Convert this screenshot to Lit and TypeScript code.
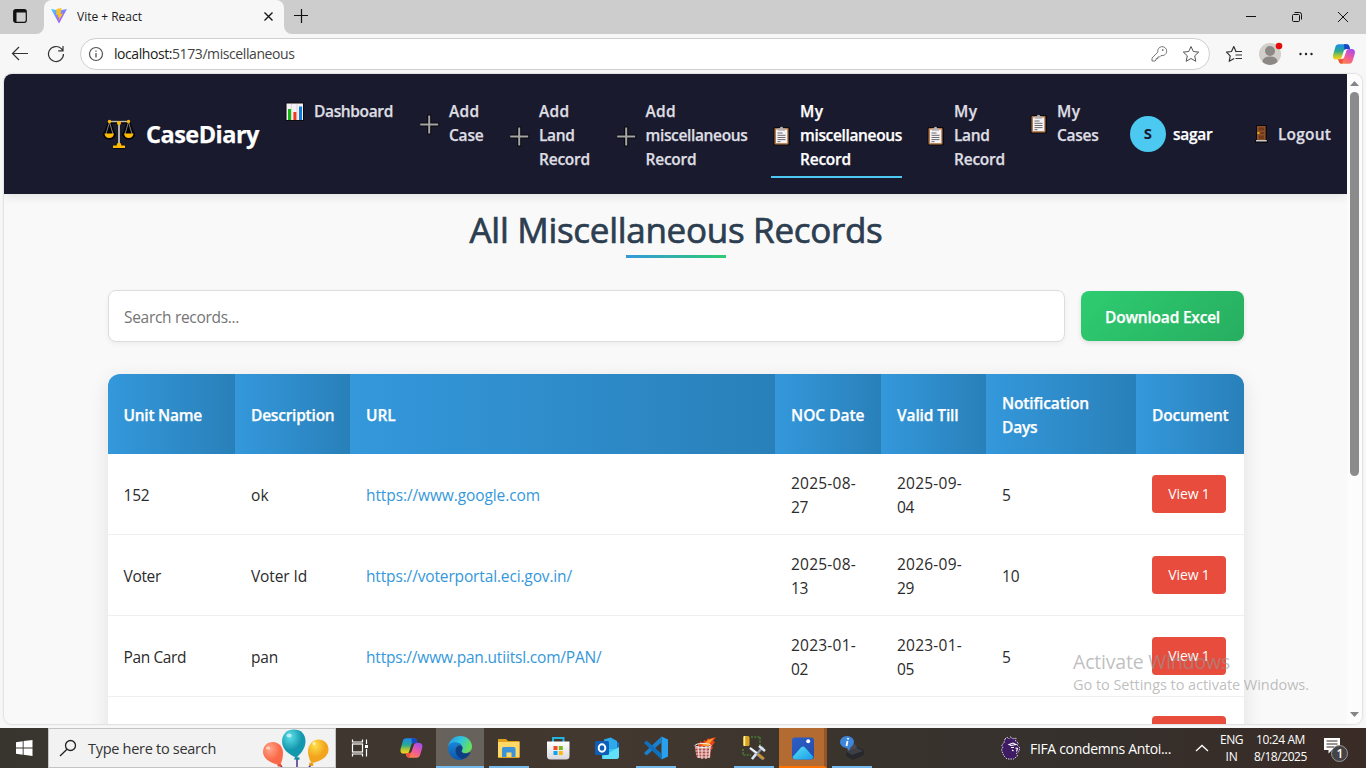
import { LitElement, html, css, svg } from "lit";
import { customElement, property } from "lit/decorators.js";

/* A single line of text whose tracking is adjusted to fill a given width. */
@customElement("fit-text")
class FitText extends LitElement {
  @property() text = "";
  @property({ type: Number }) w = 0;
  static styles = css`
    :host { display: block; white-space: pre; width: max-content; }
    span { display: inline-block; }
  `;
  render() { return html`<span>${this.text}</span>`; }
  firstUpdated() {
    const s = this.renderRoot.querySelector("span") as HTMLElement;
    const n = this.text.length;
    if (this.w && n) s.style.letterSpacing = (this.w - s.getBoundingClientRect().width) / n + "px";
  }
}
const t = (text: string, w: number) => html`<fit-text .text=${text} .w=${w}></fit-text>`;

const plus = html`<svg width="22" height="22" viewBox="2 0 22 22"><path d="M9.2 1.5h4v8h8v4h-8v8h-4v-8h-8v-4h8z" fill="#08080e"/><path d="M10.2 2.5h2v8h8v2h-8v8h-2v-8h-8v-2h8z" fill="#a5a5a5"/></svg>`;
const board = html`<svg width="20" height="22" viewBox="-1 0 20 22"><rect x="1.5" y="2" width="16.5" height="18.5" rx="1.5" fill="#0b0a10"/><rect x="2.5" y="3" width="14" height="16.5" rx="1" fill="#b57b4b"/><rect x="4" y="4.5" width="11.2" height="13.6" fill="#f4f2f4"/><path d="M6 3.4h1.8a1.7 1.7 0 013.4 0H13v2.4H6z" fill="#b5b0b4"/><path d="M5.5 8h5M5.5 10.3h8M5.5 12.5h8M5.5 14.6h8M5.5 16.7h3" stroke="#6e6a70"/></svg>`;
const chart = html`<svg width="20" height="22" viewBox="0 0 20 22"><rect x=".5" y="1.5" width="18.5" height="18.5" fill="#0b0a10"/><rect x="1.5" y="2.5" width="16.5" height="16.5" fill="#f4f0f4"/><path d="M6.5 3v16M12 3v16" stroke="#ddd7dd"/><rect x="3" y="8" width="3" height="11" fill="#13b510"/><rect x="8.4" y="11" width="3" height="8" fill="#f03a20"/><rect x="14" y="5.5" width="3" height="13.5" fill="#0d7cdd"/></svg>`;
const door = html`<svg width="14" height="20" viewBox="0 0 14 20"><path d="M2 1h11v15h1v3H1v-3h1z" fill="#0b0a10"/><path d="M3 2h8.6v14H3z" fill="#8d4f2a"/><path d="M4.8 3.6h5.2v3H4.8zM4.8 11.6h5.2V15H4.8zM6.5 8h3.5v2H6.5z" fill="#71391a"/><circle cx="4.4" cy="9" r="1.1" fill="#ffb900"/><path d="M2 16h10.8v1.6H2z" fill="#c9c9c9"/></svg>`;
const scales = html`<svg width="32" height="34" viewBox="0 0 32 34"><g stroke="#050508" stroke-width="3.5" fill="#050508" stroke-linejoin="round"><path d="M7 5h18M16 3v26M10 30h12M6.500 5L2 18h9zM25.500 5L21 18h9z"/><path d="M1.500 17h9.500q-1 4-4.750 4T1.500 17zM21 17h9.500q-1 4-4.750 4T21 17z"/></g><path d="M7 4.500h18" stroke="#bdbdbd" stroke-width="1.300"/><path d="M16 6v21" stroke="#b0b0b0" stroke-width="2.200"/><path d="M6.500 5L3 17M6.500 5l3.500 12M25.500 5L22 17M25.500 5L29 17" stroke="#9b9b9b" stroke-width=".8"/><g fill="#ffb900"><circle cx="6.500" cy="4.500" r="1.700"/><circle cx="25.500" cy="4.500" r="1.700"/><circle cx="16" cy="6" r="2.100"/><path d="M1.500 16.500H11q-.7 4.500-4.750 4.500T1.500 16.500zM21 16.500h9.500q-.7 4.500-4.750 4.500T21 16.500zM14.500 26h3l1 2.500h3.500v2.500h-12v-2.500h3.500z"/></g></svg>`;
const copilot = (id: string) => svg`<defs>
  <linearGradient id="${id}a" x1="0" y1="0" x2="0" y2="1"><stop offset="0" stop-color="#1c8cf0"/><stop offset=".45" stop-color="#2aa98f"/><stop offset=".75" stop-color="#b5c832"/><stop offset="1" stop-color="#ffd21c"/></linearGradient>
  <linearGradient id="${id}b" x1=".8" y1="0" x2=".2" y2="1"><stop offset="0" stop-color="#a44cf0"/><stop offset=".5" stop-color="#f05a9a"/><stop offset="1" stop-color="#ff8a3c"/></linearGradient></defs>
  <path d="M6.500 1.200H14c1.800 0 2.500 1 3 2.800l.6 2H14c-1.800 0-2.500.8-3 2.500L9.300 14c-.5 1.800-1.200 2.600-3 2.600H3.500C.8 16.600 0 14 .7 11.500l2-7C3.300 2.300 4.300 1.200 6.500 1.200z" fill="url(#${id}a)"/>
  <path d="M11.500 1.200h2.700c1.700 0 2.300 1 2.800 2.800l.6 2H14c-1 0-1.700.3-2.200 1z" fill="#1748c8"/>
  <path d="M16.500 20.800H9.200c-1.800 0-2.500-1-3-2.800l-.5-1.700h3c1.800 0 2.700-.8 3.200-2.500l1.800-5.300c.5-1.800 1.300-2.500 3-2.500h2.700c2.700 0 3.500 2.500 2.800 5l-2 6.500c-.7 2.200-1.700 3.300-3.700 3.300z" fill="url(#${id}b)"/>
  <path d="M5.700 16.300h3c1 0 1.700-.3 2.300-1l-1.500 5.400c-1.800 0-2.700-1-3.200-2.700z" fill="#f0503c"/>`;

const NAV: [any, [string, number][], boolean][] = [
  [chart, [["Dashboard", 79]], false],
  [plus, [["Add", 30.500], ["Case", 34.500]], false],
  [plus, [["Add", 30.500], ["Land", 35.500], ["Record", 51]], false],
  [plus, [["Add", 30.500], ["miscellaneous", 102], ["Record", 51]], false],
  [board, [["My", 23.500], ["miscellaneous", 102], ["Record", 51]], true],
  [board, [["My", 23.500], ["Land", 35.500], ["Record", 51]], false],
  [board, [["My", 23.500], ["Cases", 41.500]], false],
];
const HEAD: [string, number][][] = [[["Unit Name", 78.500]], [["Description", 83.500]], [["URL", 29.500]], [["NOC Date", 73.500]], [["Valid Till", 61.500]], [["Notification", 87], ["Days", 35.500]], [["Document", 76.500]]];
const ROWS: [string, number][][][] = [
  [[["152", 26]], [["ok", 18]], [["https://www.google.com", 174]], [["2025-08-", 65], ["27", 17]], [["2025-09-", 65], ["04", 17]], [["5", 9]]],
  [[["Voter", 37.500]], [["Voter Id", 56]], [["https://voterportal.eci.gov.in/", 206]], [["2025-08-", 65], ["13", 17]], [["2026-09-", 65], ["29", 17]], [["10", 17.500]]],
  [[["Pan Card", 62.500]], [["pan", 27]], [["https://www.pan.utiitsl.com/PAN/", 235.500]], [["2023-01-", 65], ["02", 17]], [["2023-01-", 65], ["05", 17]], [["5", 9]]],
];

/* Taskbar application icons, each on a 24px grid. */
const APPS: [any, string][] = [
  [svg`<g fill="none" stroke="#fff" stroke-width="1.200"><rect x="4.500" y="8" width="10" height="8"/><path d="M4.500 3.500v2.500h10V3.500M4.500 20.500V18h10v2.500M18.500 3.500V8M18.500 13v7.500"/></g><rect x="17" y="9" width="3" height="3" fill="#fff"/>`, "first"],
  [svg`<g transform="translate(1 1)">${copilot("t")}</g>`, ""],
  [svg`<defs><linearGradient id="e1" x1="0" x2="1" y2=".4"><stop stop-color="#2496e8"/><stop offset=".55" stop-color="#30c6dc"/><stop offset="1" stop-color="#65e060"/></linearGradient><linearGradient id="e2" x1="0" y1="0" x2="0" y2="1"><stop stop-color="#1686d8"/><stop offset="1" stop-color="#0b55ad"/></linearGradient></defs><path d="M.3 10.500C1 4.500 6 0 12 0c7 0 12 5 12 10.500 0 4-3 6.500-6.500 6.500-2.500 0-4-1-4-1.800 0-.7 1-1 1-3.200 0-3-3-5-6.500-5-4 0-6.800 1.700-7.700 3.500z" fill="url(#e1)"/><path d="M.2 11C1 7.500 4.500 6 8 6.300c3 .2 5 1.700 5.800 3.200-3-1-6.800 1-6.300 5.500.4 4 4 7 8 8.300-1 .5-2.200.7-3.500.7C4.500 24-.5 18 .2 11z" fill="url(#e2)"/><path d="M7.500 14.500c0-3 2-5 4.600-5 1.500 0 2.400 1.200 2.400 2.500 0 1.800-1 2.300-1 3.200 0 1 2 2.800 5 2.300 1.300-.2 2.500-.7 3.500-1.200.4-.2.7.2.4.6-1.500 2.800-4 5.200-7.400 6.100-4-.6-7.500-4-7.500-8.500z" fill="#0d3f86"/>`, "cur"],
  [svg`<path d="M1 3h8l2 2h11.500v17H1z" fill="#e0a21a"/><path d="M1 6h21.500v15H1z" fill="#ffd968"/><path d="M5 12.500Q5 11 6.500 11h10.500q1.500 0 1.500 1.500V21h-4v-4.500h-5V21H5z" fill="#3b94d9"/>`, "run"],
  [svg`<defs><linearGradient id="st" x2="0" y2="1"><stop stop-color="#fff"/><stop offset="1" stop-color="#d8d8dc"/></linearGradient></defs><path d="M7 6V2h10.500v4" fill="none" stroke="#22b5e0" stroke-width="2"/><path d="M1 5.500h22.500V20q0 3.500-3.500 3.500H4.500Q1 23.500 1 20z" fill="url(#st)"/><path d="M7.500 10h4v4h-4z" fill="#f04a22"/><path d="M12.800 10h4v4h-4z" fill="#7ab81e"/><path d="M7.500 15h4v4h-4z" fill="#10a2ee"/><path d="M12.800 15h4v4h-4z" fill="#fcb815"/>`, ""],
  [svg`<path d="M7 6l8.500-4.500L24 7v5H7z" fill="#1571cb"/><path d="M9 3.500l6.500-2L22 5v9H9z" fill="#2da9ec"/><path d="M7 13h17v7q0 3-3 3H7z" fill="#35c7ee"/><path d="M7 21L24 11v9q0 3-3 3H9z" fill="#61e0f8"/><rect y="5" width="14" height="14" rx="1.500" fill="#0e5eb8"/><ellipse cx="7" cy="12" rx="3.300" ry="3.700" fill="none" stroke="#fff" stroke-width="2"/>`, ""],
  [svg`<path d="M17.500.5L24 3.500v17l-6.500 3z" fill="#28a0ee"/><path d="M17.500.5L1 16l-1 1 2.500 2.500 15-13z" fill="#1b80cc"/><path d="M0 7l2.500-2.500 15 13v6z" fill="#0f70bd"/>`, "run"],
  [svg`<path d="M5 7l2 1V5l3 2 1-3 2 1 2-3 1 1 7-2-3 4 2 1-3 4 1 2-3 3-3-2-9 1z" fill="#f04218"/><path d="M8 9l4-2 3-3 6-2-4 5-1 4-5-1z" fill="#ff9a28"/><path d="M1.500 10h17l-1 11q-7 3-14 0z" fill="#b04d48"/><path d="M2 12h16M2.500 15h15M3 18h14M4 21h13M5 10l1 12M9 10v13M13 10v13M17 10l-1 12" stroke="#eed8d4" stroke-width="1.200"/><ellipse cx="10" cy="9.500" rx="8" ry="2" fill="none" stroke="#eee"/>`, ""],
  [svg`<rect x="1" y="0" width="6.500" height="10" rx="1.500" fill="#d9a520"/><path d="M2.500 0v10" stroke="#fff1a0" stroke-width="1.500"/><path d="M9 1h9v9M1 13v6h8" fill="none" stroke="#46a035" stroke-width="1.200" stroke-dasharray="2 1.200"/><path d="M8 12l13 11M21 11L10 23" stroke="#8793a8" stroke-width="2.500"/><path d="M8 12l7 5" stroke="#f3f5fa" stroke-width="1.800"/><path d="M17 10l6 5M14 18l-4 5" stroke="#dce3f0" stroke-width="2.500"/><path d="M16 18l6 5" stroke="#c69232" stroke-width="2.500"/>`, "run"],
  [svg`<defs><linearGradient id="ph" x2="1" y2="1"><stop stop-color="#2c5ec8"/><stop offset="1" stop-color="#234caa"/></linearGradient><linearGradient id="pm" x2="1" y2="1"><stop stop-color="#55e2f2"/><stop offset="1" stop-color="#1b9bea"/></linearGradient></defs><rect x="1" y="1.500" width="22" height="22" rx="3" fill="url(#ph)"/><path d="M1.500 21L10 11.500q2-2 4 0l8.500 9.500q-1 2.500-3.500 2.500H4.500Q2 23.500 1.500 21z" fill="url(#pm)"/><circle cx="17.200" cy="5.200" r="2" fill="#fff"/>`, "photo"],
  [svg`<path d="M7 14l10-3 7 3v5l-11 5-7-4z" fill="#27282c"/><path d="M5 10l10-2 3 6-9 3z" fill="#484a50"/><path d="M6 15l11-3 6 3-11 4z" fill="#3d3f45"/><ellipse cx="7" cy="6" rx="7" ry="6" fill="#3e86dc"/><path d="M6 10l3 5 2-5z" fill="#3e86dc"/><path d="M8 2v1.500M7.500 5L6.500 10" stroke="#fff" stroke-width="1.800"/>`, "run"],
];

@customElement("app-root")
class AppRoot extends LitElement {
  static styles = css`
    :host { display: block; width: 1366px; height: 768px; overflow: hidden; position: relative; background: #f7f7f7; font-family: "Open Sans", "Noto Sans", sans-serif; color: #2b2b2b; }
    * { box-sizing: border-box; }
    svg { display: block; flex: none; }
    .tabs { height: 34px; background: #cdcdcd; display: flex; }
    .tabwrap { background: #f7f7f7; display: flex; }
    .panel { width: 44px; height: 34px; border-radius: 0 0 8px 0; padding: 9px 0 0 13px; background: #cdcdcd; }
    .tab { width: 240px; background: #f7f7f7; border-radius: 8px 8px 0 0; display: flex; align-items: center; padding: 0 10px 2px 6px; font-size: 12px; color: #1a1a1a; }
    .tab svg + fit-text { margin-left: 9px; flex: 1; }
    .tabedge { background: #cdcdcd; display: flex; }
    .rest { flex: 1; background: #cdcdcd; border-radius: 0 0 0 8px; display: flex; justify-content: space-between; }
    .holder { flex: 1; background: #f7f7f7; display: flex; }
    .new { margin: 8px 0 0 9px; }
    .win { display: flex; gap: 34px; padding: 11px 17px 0 0; }
    .bar { height: 40px; display: flex; align-items: center; padding: 0 10px 0 11px; }
    .addr { margin-left: 15px; width: 1130px; height: 32px; border: 1px solid #cfcfcf; border-radius: 16px; background: #fff; display: flex; align-items: center; padding: 0 9px 0 7px; font-size: 14px; line-height: 18px; color: #444; }
    .addr .host { color: #1b1b1b; margin-left: 10px; }
    .addr .key { margin-left: auto; margin-right: 14px; }
    .reload { margin-left: 18px; }
    .face { margin-left: 15px; }
    .more { margin-left: 15px; }
    .pilot { margin-left: 19px; }
    .tools { display: flex; align-items: center; margin-left: 15px; }
    .view { margin: 0 4px; width: 1358px; height: 650px; border-radius: 8px; overflow: hidden; display: flex; background: #fff; box-shadow: 0 0 2px rgba(0,0,0,.3); }
    .page { width: 1343px; background: #f9f9f9; overflow: hidden; }
    .scroll { width: 15px; background: #fcfcfc; display: flex; flex-direction: column; align-items: center; padding: 7px 0; }
    .thumb { width: 9px; height: 384px; border-radius: 5px; background: #8b8b8b; margin: 6px 0 auto; }
    nav { height: 120px; background: #1a1a2e; display: flex; padding-left: 99px; box-shadow: 0 2px 10px rgba(0,0,0,.1); font-weight: 600; font-size: 15.500px; line-height: 23.800px; color: #dedee2; -webkit-text-stroke: .25px currentColor; }
    .brand { display: flex; align-items: center; width: 182px; color: #fff; font-size: 23.500px; font-weight: 700; gap: 11px; }
    .brand fit-text { padding-top: 2px; }
    .links { display: grid; grid-template-columns: 135px 90px 106.500px 154.500px 154px 103px 98px; padding-top: 16px; align-items: start; }
    .link { display: flex; align-items: center; padding: 10px 0 5px; border-bottom: 2px solid transparent; width: max-content; }
    .link .ic { width: 29px; }
    .on { color: #fff; border-color: #4cc9f0; }
    .user { display: flex; align-items: center; color: #fff; padding-left: 4px; width: 128px; gap: 7px; }
    .user > fit-text, .out > fit-text { padding-top: 2px; }
    .ava { width: 36px; height: 36px; border-radius: 50%; background: #4cc9f0; color: #1a1a2e; display: flex; align-items: center; justify-content: center; font-weight: 700; font-size: 15px; -webkit-text-stroke: 0; }
    .out { display: flex; align-items: center; gap: 10px; }
    main { padding: 16px 103px 0 104px; }
    h1 { margin: 0 auto; font-size: 35px; line-height: 40px; padding-bottom: 2px; font-weight: 400; -webkit-text-stroke: .7px #2c3e50; color: #2c3e50; width: max-content; }
    .rule { width: 100px; height: 3px; margin: 3px auto 0; background: linear-gradient(90deg, #3498db, #2ecc71); }
    .find { display: flex; align-items: center; gap: 16px; margin-top: 32px; font-size: 15.500px; }
    .inp { width: 957px; height: 52px; border: 1px solid #ddd; border-radius: 8px; background: #fff; color: #757575; display: flex; align-items: center; padding: 1px 0 0 15px; box-shadow: 0 2px 5px rgba(0,0,0,.05); }
    .dl { width: 163px; height: 50px; border-radius: 8px; background: linear-gradient(135deg, #2ecc71, #27ae60); color: #fff; font-weight: 600; -webkit-text-stroke: .25px #fff; display: flex; align-items: center; justify-content: center; padding-top: 1px; box-shadow: 0 2px 5px rgba(0,0,0,.1); }
    .table { width: 1136px; border-radius: 12px; overflow: hidden; background: #fff; font-size: 15.500px; line-height: 24px; }
    .shade { margin-top: 32px; border-radius: 12px; box-shadow: 0 5px 20px rgba(0,0,0,.1); }
    .tr { display: grid; grid-template-columns: 127px 115px 425px 106px 105px 150px 108px; height: 81px; border-bottom: 1px solid #ecf0f1; }
    .hd { height: 80px; border: 0; color: #fff; font-weight: 600; -webkit-text-stroke: .25px #fff; }
    .td { padding: 1px 0 0 16px; display: flex; flex-direction: column; justify-content: center; }
    .td:first-child { padding-left: 15.500px; }
    .td:last-child { padding-top: 0; }
    .hd .td { padding-top: 1px; background: linear-gradient(90deg, #3498db, #2980b9); }
    .url { color: #3498db; }
    .btn { width: 74px; height: 38px; border-radius: 4px; background: #e74c3c; color: #fff; font-size: 14px; display: flex; align-items: center; justify-content: center; }
    .cut .td:last-child { justify-content: flex-start; padding-top: 19px; }
    .mark { position: absolute; left: 1073px; top: 649px; color: rgba(150,150,150,.62); font-size: 14.500px; line-height: 20px; }
    .mark .big { font-size: 19.500px; line-height: 26px; }
    .task { height: 40px; margin-top: 4px; display: flex; background: linear-gradient(90deg, #38352f, #43382f 45%, #38332d 65%, #35302c 80%, #3a2b26); color: #fff; }
    .start { width: 48px; display: flex; align-items: center; justify-content: center; }
    .search { width: 288px; background: #f2f2f2; border: 1px solid #c4c4c4; display: flex; align-items: center; color: #333; font-size: 14.500px; padding-left: 10px; }
    .search fit-text { margin: 0 46px 0 11px; }
    .apps { display: flex; gap: 1px; }
    .app { width: 48px; height: 40px; display: flex; justify-content: center; padding-top: 8px; }
    .first { margin-right: 2px; }
    .cur { background: #68625c; border-bottom: 2px solid #76b9ed; }
    .run { border-bottom: 2px solid #76b9ed; width: 40px; margin: 0 4px; }
    .photo { background: #b46b31; border-bottom: 2px solid #ff7300; border-right: 3px solid #955527; padding-left: 3px; }
    .tray { margin-left: auto; display: flex; align-items: center; font-size: 12px; line-height: 17px; padding-right: 5px; }
    .col { display: flex; flex-direction: column; align-items: center; margin-left: 11px; padding-bottom: 1px; }
    .news { font-size: 14px; margin-left: 9px; }
    .up { margin-left: 24px; }
    .note { margin: 3px 12px 0 16px; }
  `;
  lines(l: [string, number][]) { return l.map(([a, b]) => t(a, b)); }
  render() {
    return html`
      <div class="tabs">
        <div class="tabwrap"><div class="panel"><svg width="14" height="14" viewBox="0 0 14 14"><rect x=".7" y=".7" width="12.600" height="12.600" rx="2" fill="none" stroke="#111" stroke-width="1.200"/><path d="M1 1h12v2.500H1zM1 3h2.500v10H1z" fill="#111"/></svg></div></div>
        <div class="tabedge"><div class="tab">
          <svg width="18" height="18" viewBox="0 0 18 18"><defs><linearGradient id="v" x2=".8" y2="1"><stop stop-color="#41d1ff"/><stop offset="1" stop-color="#bd34fe"/></linearGradient></defs><path d="M1 2l8 14.500L17 2 9 3.500z" fill="url(#v)"/><path d="M11.500 1L6.500 2l-.3 6 2-.4-.6 3 1.800-.6-1 4.500L13 6.500l-2.500.4z" fill="#ffbf24"/></svg>
          ${t("Vite + React", 65)}
          <svg width="11" height="11" viewBox="0 0 11 11"><path d="M1.500 1.500l8 8M9.500 1.500l-8 8" stroke="#111" stroke-width="1.300"/></svg>
        </div></div>
        <div class="holder"><div class="rest">
          <svg class="new" width="16" height="16" viewBox="0 0 16 16"><path d="M1 7.500h14M8.500 1v14" stroke="#111" stroke-width="1.200"/></svg>
          <div class="win">
            <svg width="12" height="12" viewBox="0 0 12 12"><path d="M1 5.500h10" stroke="#111"/></svg>
            <svg width="12" height="12" viewBox="0 0 12 12"><rect x="1.500" y="3.500" width="7" height="7" rx="1" fill="none" stroke="#111"/><path d="M3.500 1.500h5q2 0 2 2v5" fill="none" stroke="#111"/></svg>
            <svg width="12" height="12" viewBox="0 0 12 12"><path d="M1 1l10 10M11 1L1 11" stroke="#111"/></svg>
          </div>
        </div></div>
      </div>
      <div class="bar">
        <svg width="18" height="18" viewBox="0 0 18 18"><path d="M17 8.500H1.500M8 2l-6.500 6.500L8 15" fill="none" stroke="#333" stroke-width="1.200"/></svg>
        <svg class="reload" width="18" height="18" viewBox="0 0 18 18"><path d="M16.500 9a7.500 7.500 0 11-2.200-5.300L16 5.500M16 1v4.800h-4.800" fill="none" stroke="#333" stroke-width="1.200"/></svg>
        <div class="addr">
          <svg width="16" height="16" viewBox="0 0 16 16"><circle cx="8" cy="8" r="6.500" fill="none" stroke="#555" stroke-width="1.200"/><path d="M8 7v4.500M8 4.500v1.300" stroke="#555" stroke-width="1.300"/></svg>
          <span class="host">${t("localhost:", 58)}</span>${t("5173/miscellaneous", 122.5)}
          <svg class="key" width="18" height="18" viewBox="0 0 18 18"><path d="M2 16v-3l5.800-5.800A4.500 4.500 0 1111 10.500L9.500 12H7.800v1.700H6V15l-1 1z" fill="none" stroke="#777"/><circle cx="12.700" cy="5" r=".9" fill="#777"/></svg>
          <svg width="18" height="18" viewBox="0 0 18 18"><path d="M9 1.500l2.300 5 5.400.6-4 3.700 1.100 5.500L9 13.500l-4.800 2.800 1.100-5.500-4-3.700 5.400-.6z" fill="none" stroke="#555" stroke-linejoin="round"/></svg>
        </div>
        <div class="tools">
          <svg width="18" height="18" viewBox="0 0 18 18"><path d="M10.500 7L11 6.500 8.800 1.500 6.500 6.500l-5 .6 3.700 3.700-1 5.500 5-2.800M11 6.500h6M10.500 10H17M10.500 13.500H17" fill="none" stroke="#333" stroke-width="1.200" stroke-linejoin="round"/></svg>
          <svg class="face" width="26" height="26" viewBox="0 1 26 26"><circle cx="12" cy="14" r="11" fill="#d2cfcb"/><circle cx="12" cy="11" r="5" fill="#8b8886"/><path d="M4.500 22q0-5.500 7.500-5.500t7.500 5.500a11 11 0 01-15 0z" fill="#8b8886"/><circle cx="21" cy="6" r="3.300" fill="#e30b0b"/></svg>
          <svg class="more" width="14" height="4" viewBox="0 0 14 4"><g fill="#222"><circle cx="1.500" cy="2" r="1.200"/><circle cx="7" cy="2" r="1.200"/><circle cx="12.500" cy="2" r="1.200"/></g></svg>
          <svg class="pilot" width="23" height="22" viewBox="0 0 22 22">${copilot("c")}</svg>
        </div>
      </div>
      <div class="view">
        <div class="page">
          <nav>
            <div class="brand">${scales}${t("CaseDiary", 113)}</div>
            <div class="links">${NAV.map(([ic, l, on]) => html`<div class="link ${on ? "on" : ""}"><div class="ic">${ic}</div><div>${this.lines(l)}</div></div>`)}</div>
            <div class="user"><div class="ava">S</div>${t("sagar", 39.5)}</div>
            <div class="out">${door}${t("Logout", 53)}</div>
          </nav>
          <main>
            <h1>${t("All Miscellaneous Records", 413)}</h1>
            <div class="rule"></div>
            <div class="find"><div class="inp">${t("Search records...", 115)}</div><div class="dl">${t("Download Excel", 115)}</div></div>
            <div class="shade"><div class="table">
              <div class="tr hd">${HEAD.map((h) => html`<div class="td">${this.lines(h)}</div>`)}</div>
              ${ROWS.map((r) => html`<div class="tr">${r.map((c, i) => html`<div class="td ${i === 2 ? "url" : ""}">${this.lines(c)}</div>`)}<div class="td"><div class="btn">${t("View 1", 41.5)}</div></div></div>`)}
              <div class="tr cut">${[0, 1, 2, 3, 4, 5].map(() => html`<div class="td"></div>`)}<div class="td"><div class="btn"></div></div></div>
            </div></div>
          </main>
        </div>
        <div class="scroll">
          <svg width="9" height="5" viewBox="0 0 9 5"><path d="M0 5L4.500 0 9 5z" fill="#858585"/></svg>
          <div class="thumb"></div>
          <svg width="9" height="5" viewBox="0 0 9 5"><path d="M0 0l4.500 5L9 0z" fill="#858585"/></svg>
        </div>
      </div>
      <div class="task">
        <div class="start"><svg width="17" height="16" viewBox="0 0 17 16"><path d="M0 2.200L6.700 1.200v6.300H0zM7.600 1.100L16.500 0v7.500H7.600zM0 8.400h6.700v6.300L0 13.800zM7.600 8.400h8.900V16l-8.900-1.200z" fill="#fff"/></svg></div>
        <div class="search">
          <svg width="18" height="18" viewBox="0 0 18 18"><circle cx="11.500" cy="6.500" r="5" fill="none" stroke="#222" stroke-width="1.300"/><path d="M8 10.200L1 17" stroke="#222" stroke-width="1.300"/></svg>
          ${t("Type here to search", 128)}
          <svg width="68" height="38" viewBox="0 0 68 38"><defs><radialGradient id="b1" cx=".35" cy=".3"><stop stop-color="#ffa58c"/><stop offset="1" stop-color="#fb6a48"/></radialGradient><radialGradient id="b2" cx=".35" cy=".25"><stop stop-color="#5ee0ea"/><stop offset="1" stop-color="#1397ad"/></radialGradient><radialGradient id="b3" cx=".35" cy=".25"><stop stop-color="#ffe04a"/><stop offset="1" stop-color="#f2a41c"/></radialGradient></defs>
            <path d="M18 36l2 2M35 29v9M49 36l-2 2" stroke="#472a86" stroke-width="1.500"/>
            <path d="M1 23c0-6 4-10 10-10s10 5 10 11c0 5-1.500 10-3 12C10 35 1 30 1 23z" fill="url(#b1)"/><path d="M15 35.500l4-.5 1 2.500h-4z" fill="#ec4b2e"/>
            <path d="M66.500 21c0-6-4-10.500-10-10.500S46 16 46 22c0 5 2 10 3.500 12 8-1 17-6 17-13z" fill="url(#b3)"/><path d="M47.500 33.500l4 1-.5 2.500-4-.5z" fill="#e89a14"/>
            <path d="M20 12.500C20 5 25 .5 32 .5S43.500 5 43.500 12.500C43.500 19 38 26 34.500 28.500 27 26 20 20 20 12.500z" fill="url(#b2)"/><path d="M33 28l4.500.5v2.300L32 30.500z" fill="#128ba1"/>
            <g fill="#fff" opacity=".6"><ellipse cx="27" cy="6.500" rx="2.500" ry="2"/><ellipse cx="6" cy="19" rx="2" ry="1.500"/><ellipse cx="52" cy="14.500" rx="1.500" ry="2"/></g>
          </svg>
        </div>
        <div class="apps">${APPS.map(([g, c]) => html`<div class="app ${c}"><svg width="24" height="24" viewBox="0 0 24 24">${g}</svg></div>`)}</div>
        <div class="tray">
          <svg width="20" height="24" viewBox="0 0 20 24"><path d="M4 3L6 1l1.500 2L10 .5 11.500 3 15 2l-.5 3 3 2-1.500 2L19 12l-1.500 4-2 1 1 3-4 3H6L3 20 .5 14 2 11 .5 9 3 7z" fill="#3e1b63" stroke="#e8dff0" stroke-width=".9" stroke-dasharray="1.500 1"/><path d="M8 8.500l4-1.500 3 1.500-5 1zM10 11.500h3M14.500 12l2 .5-1 3M11 14l1.500 1" stroke="#fff" stroke-width="1.100" fill="none"/></svg>
          <div class="news">${t("FIFA condemns Antoi...", 141)}</div>
          <svg class="up" width="14" height="8" viewBox="0 0 14 8"><path d="M1 7l6-5.500L13 7" fill="none" stroke="#fff" stroke-width="1.300"/></svg>
          <div class="col">${t("ENG", 23)}${t("IN", 12)}</div>
          <div class="col">${t("10:24 AM", 49)}${t("8/18/2025", 53)}</div>
          <svg class="note" width="26" height="28" viewBox="0 0 26 28"><path d="M1 2h16v12H9l-3.500 3.500V14H1z" fill="#fff"/><path d="M3.500 5h11M3.500 8h11M3.500 11h8" stroke="#3a2b26"/><circle cx="16.500" cy="17.500" r="8" fill="#454343" stroke="#9a9a9a"/><text x="13.500" y="22" font-size="12" font-weight="600" fill="#fff">1</text></svg>
        </div>
      </div>
      <div class="mark"><div class="big">${t("Activate Windows", 157)}</div>${t("Go to Settings to activate Windows.", 236)}</div>
    `;
  }
}
